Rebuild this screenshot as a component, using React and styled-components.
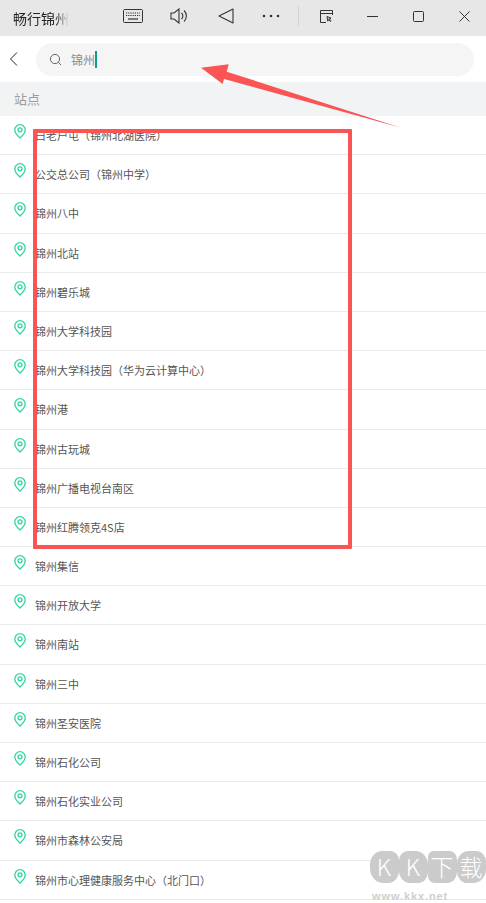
import styled, { createGlobalStyle } from "styled-components";

const stations = [
  "白老户屯（锦州北湖医院）",
  "公交总公司（锦州中学）",
  "锦州八中",
  "锦州北站",
  "锦州碧乐城",
  "锦州大学科技园",
  "锦州大学科技园（华为云计算中心）",
  "锦州港",
  "锦州古玩城",
  "锦州广播电视台南区",
  "锦州红腾领克4S店",
  "锦州集信",
  "锦州开放大学",
  "锦州南站",
  "锦州三中",
  "锦州圣安医院",
  "锦州石化公司",
  "锦州石化实业公司",
  "锦州市森林公安局",
  "锦州市心理健康服务中心（北门口）",
];

const PinIcon = () => (
  <svg width="12" height="15" viewBox="0 0 12 15" fill="none" stroke="#2fd6a0" strokeWidth="1.3">
    <path d="M6 14 C3.6 11.8 .8 9 .8 5.9 A5.2 5.2 0 0 1 11.2 5.9 C11.2 9 8.4 11.8 6 14 Z" />
    <circle cx="6" cy="5.8" r="2" />
  </svg>
);

export default function App() {
  return (
    <>
      <GlobalStyle />
      <Page>
        <TitleBar>
          <Title>畅行锦州</Title>
          <Tools>
            <ToolSlot $w={34}>
              <svg width="20" height="14" viewBox="0 0 20 14" fill="none" stroke="#333" strokeWidth="1">
                <rect x=".5" y=".5" width="19" height="13" rx="1" />
                <path d="M3 4h14M3 6.5h14" strokeDasharray="1.2 1" />
                <path d="M5 10h10" strokeWidth="1.2" />
              </svg>
            </ToolSlot>
            <ToolSlot $w={58}>
              <svg width="18" height="16" viewBox="0 0 18 16" fill="none" stroke="#333" strokeWidth="1.1">
                <path d="M1 5h3l5-4v14l-5-4H1z" />
                <path d="M11.5 5a4 4 0 0 1 0 6M14 2.5a7.5 7.5 0 0 1 0 11" />
              </svg>
            </ToolSlot>
            <ToolSlot $w={36}>
              <svg width="16" height="16" viewBox="0 0 16 16" fill="none" stroke="#333" strokeWidth="1.1">
                <path d="M15 1v14L1 8z" strokeLinejoin="round" />
              </svg>
            </ToolSlot>
            <ToolSlot $w={54}>
              <svg width="18" height="4" viewBox="0 0 18 4" fill="#333">
                <circle cx="2" cy="2" r="1.3" />
                <circle cx="9" cy="2" r="1.3" />
                <circle cx="16" cy="2" r="1.3" />
              </svg>
            </ToolSlot>
            <ToolDivider />
            <ToolSlot $w={54}>
              <svg width="13" height="13" viewBox="0 0 13 13" fill="none" stroke="#333" strokeWidth="1">
                <path d="M6 12.5H.5V.5h12V5M.5 3.5h12" />
                <path d="M7 6.5l4 1.6-1.7.7 1.7 2-.8.7-1.7-2-.8 1.6z" />
              </svg>
            </ToolSlot>
            <ToolSlot $w={38}>
              <svg width="11" height="11" viewBox="0 0 11 11" stroke="#333" strokeWidth="1">
                <path d="M0 5.5h11" />
              </svg>
            </ToolSlot>
            <ToolSlot $w={54}>
              <svg width="11" height="11" viewBox="0 0 11 11" fill="none" stroke="#333" strokeWidth="1">
                <rect x=".5" y=".5" width="10" height="10" rx="1" />
              </svg>
            </ToolSlot>
            <ToolSlot $w={38}>
              <svg width="11" height="11" viewBox="0 0 11 11" stroke="#333" strokeWidth="1">
                <path d="M.5.5l10 10M10.5.5l-10 10" />
              </svg>
            </ToolSlot>
          </Tools>
        </TitleBar>

        <SearchRow>
          <BackButton>
            <svg width="10" height="16" viewBox="0 0 10 16" fill="none" stroke="#222" strokeWidth="1">
              <path d="M8 1.5L1.5 8 8 14.5" />
            </svg>
          </BackButton>
          <SearchBox>
            <svg width="13" height="13" viewBox="0 0 13 13" fill="none" stroke="#666" strokeWidth="1">
              <circle cx="6" cy="6" r="4.6" />
              <path d="M9.4 9.4l2.6 2.6" />
            </svg>
            <SearchText>锦州</SearchText>
            <Caret />
          </SearchBox>
        </SearchRow>

        <SectionHead>站点</SectionHead>

        <List>
          {stations.map((name) => (
            <Row key={name}>
              <PinSlot>
                <PinIcon />
              </PinSlot>
              <RowLabel>{name}</RowLabel>
            </Row>
          ))}
        </List>

        <Highlight />
        <Arrow width="210" height="70" viewBox="0 0 210 70">
          <path
            d="M1 3.7 L28.7 .3 L26.7 7.7 L201 63.7 L24 15 L22.7 20 Z"
            fill="#fb5454"
          />
        </Arrow>

        <Watermark>
          <WatermarkBadges>
            <Badge $shape="42% 30% 38% 46%">K</Badge>
            <Badge $shape="30% 44% 34% 38%">K</Badge>
            <Badge $shape="18% 26% 34% 22%">下</Badge>
            <Badge $shape="40% 34% 44% 36%">载</Badge>
          </WatermarkBadges>
          <WatermarkUrl>www.kkx.net</WatermarkUrl>
        </Watermark>
      </Page>
    </>
  );
}

const GlobalStyle = createGlobalStyle`
  html, body {
    margin: 0;
    padding: 0;
    background: #ffffff;
  }
  body {
    font-family: "Noto Sans CJK SC", "Noto Sans", sans-serif;
  }
`;

const Page = styled.div`
  position: relative;
  width: 486px;
  height: 903px;
  overflow: hidden;
  background: #ffffff;
`;

const TitleBar = styled.div`
  height: 36px;
  background: #e7e7e7;
  display: flex;
  align-items: center;
  padding-left: 13px;
`;

const Title = styled.div`
  width: 56px;
  font-size: 14px;
  line-height: 36px;
  white-space: nowrap;
  overflow: hidden;
  background: linear-gradient(90deg, #222 76%, #e7e7e7 100%);
  -webkit-background-clip: text;
  background-clip: text;
  color: transparent;
`;

const Tools = styled.div`
  display: flex;
  align-items: center;
  margin-left: 47px;
  margin-top: -4px;
`;

const ToolSlot = styled.div`
  width: ${(props) => props.$w}px;
  height: 20px;
  display: flex;
  align-items: center;
  justify-content: center;
`;

const ToolDivider = styled.div`
  width: 1px;
  height: 20px;
  background: #d2d2d2;
`;

const SearchRow = styled.div`
  height: 46px;
  display: flex;
  align-items: center;
  padding: 0 12px 0 0;
  background: #ffffff;
`;

const BackButton = styled.div`
  width: 36px;
  display: flex;
  align-items: center;
  justify-content: center;
  padding-right: 8px;
  box-sizing: border-box;
`;

const SearchBox = styled.div`
  flex: 1;
  height: 33px;
  margin-top: 1px;
  border-radius: 17px;
  background: #f5f5f6;
  display: flex;
  align-items: center;
  padding-left: 13px;
`;

const SearchText = styled.span`
  margin-left: 9px;
  font-size: 12px;
  color: #8a8a8a;
`;

const Caret = styled.span`
  width: 1.5px;
  height: 17px;
  background: #109c8c;
`;

const SectionHead = styled.div`
  height: 34px;
  background: #f2f3f5;
  padding-left: 14px;
  font-size: 13px;
  line-height: 34px;
  color: #9c9c9c;
`;

const List = styled.div`
  display: flex;
  flex-direction: column;
`;

const Row = styled.div`
  height: 39.2px;
  box-sizing: border-box;
  border-bottom: 1px solid #ebebeb;
  display: flex;
  position: relative;
`;

const PinSlot = styled.div`
  width: 35px;
  padding: 8px 0 0 14px;
  box-sizing: border-box;
  line-height: 0;
`;

const RowLabel = styled.div`
  font-size: 11px;
  line-height: 39px;
  color: #555555;
  white-space: nowrap;
`;

const Highlight = styled.div`
  position: absolute;
  left: 33px;
  top: 129px;
  width: 319px;
  height: 420px;
  box-sizing: border-box;
  border: 4px solid #fb5454;
  border-radius: 1px;
`;

const Arrow = styled.svg`
  position: absolute;
  left: 200px;
  top: 64px;
`;

const Watermark = styled.div`
  position: absolute;
  left: 369px;
  top: 851px;
  width: 117px;
  display: flex;
  flex-direction: column;
  align-items: center;
`;

const WatermarkBadges = styled.div`
  display: flex;
  gap: 0;
`;

const Badge = styled.div`
  width: 29px;
  height: 32px;
  border-radius: ${(props) => props.$shape};
  background: #cbcbcb;
  color: #ffffff;
  font-size: 23px;
  font-weight: 300;
  line-height: 31px;
  text-align: center;
`;

const WatermarkUrl = styled.div`
  align-self: flex-start;
  margin-left: 3px;
  font-family: "Liberation Sans", sans-serif;
  font-weight: 700;
  font-size: 11px;
  letter-spacing: 0.9px;
  color: #cfcfcf;
  line-height: 14px;
  margin-top: 6px;
`;
